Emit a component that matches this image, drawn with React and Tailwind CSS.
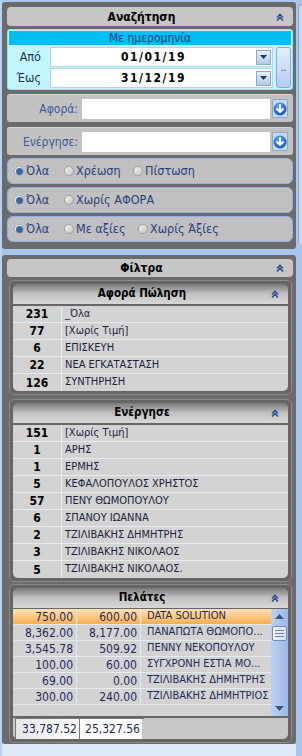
import React from "react";

const F = "font-['DejaVu_Sans_Condensed','Liberation_Sans',sans-serif]";

function Chevrons() {
  return (
    <svg width="8" height="8" viewBox="0 0 8 8">
      <path d="M1 4.5 L4 1.5 L7 4.5 M1 7.5 L4 4.5 L7 7.5" stroke="#2d4f8e" strokeWidth="1.6" fill="none" />
    </svg>
  );
}

function MainHeader({ title }) {
  return (
    <div className="h-[19px] shrink-0 rounded-[4px] bg-[#c6c6c6] flex items-center">
      <div className="flex-1 text-center text-[12px] font-bold text-black leading-none">{title}</div>
      <div className="w-[17px] flex items-center justify-start">
        <Chevrons />
      </div>
    </div>
  );
}

function SubHeader({ title }) {
  return (
    <div className="h-[20px] shrink-0 rounded-t-[5px] bg-gradient-to-b from-[#7a7a7a] via-[#c2c2c2] to-[#d8d8d8] flex items-center">
      <div className="flex-1 text-center text-[11.5px] font-bold text-black leading-none">{title}</div>
      <div className="w-[17px] flex items-center justify-start">
        <Chevrons />
      </div>
    </div>
  );
}

function DropBtn() {
  return (
    <div className="w-[15px] h-[15px] border border-[#8ea6c8] bg-gradient-to-b from-[#e6eefa] to-[#b2c8ea] flex items-center justify-center">
      <svg width="7" height="4" viewBox="0 0 7 4">
        <path d="M0 0 L7 0 L3.5 4 Z" fill="#1f3566" />
      </svg>
    </div>
  );
}

function CircleBtn() {
  return (
    <div className="w-[16px] h-[19px] border border-[#8aa6d2] bg-[#c6d8f2] rounded-[2px] flex items-center justify-center">
      <svg width="14" height="14" viewBox="0 0 14 14">
        <defs>
          <radialGradient id="cb" cx="0.4" cy="0.3" r="0.8">
            <stop offset="0" stopColor="#5da2f5" />
            <stop offset="1" stopColor="#0b4fb8" />
          </radialGradient>
        </defs>
        <circle cx="7" cy="7" r="6.5" fill="url(#cb)" />
        <path d="M7 3 V10 M4 7 L7 10 L10 7" stroke="#fff" strokeWidth="2" fill="none" strokeLinecap="round" strokeLinejoin="round" />
      </svg>
    </div>
  );
}

function Radio({ on, label, w }) {
  return (
    <div className={`flex items-center ${w}`}>
      {on ? (
        <div className="w-[10px] h-[10px] rounded-full bg-[#e8eef6] border border-[#9fb2cc] flex items-center justify-center">
          <div className="w-[7px] h-[7px] rounded-full bg-[#44649c]" />
        </div>
      ) : (
        <div className="w-[10px] h-[10px] rounded-full bg-gradient-to-br from-[#f4f4f4] to-[#c4c4c4] border border-[#a2a2a2]" />
      )}
      <span className="ml-[2px] text-[12.5px] text-[#2a3f7e] leading-none">{label}</span>
    </div>
  );
}

function RadioRow({ items }) {
  return (
    <div className="h-[26px] rounded-[6px] border border-[#8fb3e8] bg-[#c0c0c0] flex items-center pl-[6px]">
      {items.map((it, i) => (
        <Radio key={i} {...it} />
      ))}
    </div>
  );
}

function LookupRow({ label }) {
  return (
    <div className="h-[28px] rounded-[3px] bg-[#c2c2c2] border-t border-[#d6d6d6] flex items-center">
      <div className="w-[71px] text-right text-[12px] text-[#3d5a98] leading-none">{label}</div>
      <div className="ml-[4px] w-[188px] h-[20px] bg-white" />
      <div className="ml-[2px]">
        <CircleBtn />
      </div>
    </div>
  );
}

const afora = [
  ["231", "_Όλα"],
  ["77", "[Χωρίς Τιμή]"],
  ["6", "ΕΠΙΣΚΕΥΗ"],
  ["22", "ΝΕΑ ΕΓΚΑΤΑΣΤΑΣΗ"],
  ["126", "ΣΥΝΤΗΡΗΣΗ"],
];

const energise = [
  ["151", "[Χωρίς Τιμή]"],
  ["1", "ΑΡΗΣ"],
  ["1", "ΕΡΜΗΣ"],
  ["5", "ΚΕΦΑΛΟΠΟΥΛΟΣ ΧΡΗΣΤΟΣ"],
  ["57", "ΠΕΝΥ ΘΩΜΟΠΟΥΛΟΥ"],
  ["6", "ΣΠΑΝΟΥ ΙΩΑΝΝΑ"],
  ["2", "ΤΖΙΛΙΒΑΚΗΣ ΔΗΜΗΤΡΗΣ"],
  ["3", "ΤΖΙΛΙΒΑΚΗΣ ΝΙΚΟΛΑΟΣ"],
  ["5", "ΤΖΙΛΙΒΑΚΗΣ ΝΙΚΟΛΑΟΣ."],
];

const pelates = [
  ["750.00", "600.00", "DATA SOLUTION"],
  ["8,362.00", "8,177.00", "ΠΑΝΑΠΩΤΑ ΘΩΜΟΠΟ..."],
  ["3,545.78", "509.92", "ΠΕΝΝΥ ΝΕΚΟΠΟΥΛΟΥ"],
  ["100.00", "60.00", "ΣΥΓΧΡΟΝΗ ΕΣΤΙΑ ΜΟ..."],
  ["69.00", "0.00", "ΤΖΙΛΙΒΑΚΗΣ ΔΗΜΗΤΡΗΣ"],
  ["300.00", "240.00", "ΤΖΙΛΙΒΑΚΗΣ ΔΗΜΗΤΡΙΟΣ"],
];

function CountList({ rows }) {
  return (
    <div className="mt-[2px] bg-[#d3d3d3] rounded-b-[5px] overflow-hidden">
      {rows.map(([n, t], i) => (
        <div key={i} className="h-[17px] flex items-center border-b border-[#e6ecf3] last:border-b-0">
          <div className="w-[49px] h-full flex items-center justify-center border-r border-[#e6ecf3] text-[12px] font-bold text-black">
            {n}
          </div>
          <div className="pl-[3px] text-[11px] text-[#1b1f3a] whitespace-nowrap">{t}</div>
        </div>
      ))}
    </div>
  );
}

function SubPanel({ children }) {
  return (
    <div className="ml-[2px] mr-[1px] rounded-[5px] border border-[#8a8a8a] bg-[#666666] p-[3px] flex flex-col">
      {children}
    </div>
  );
}

export default function App() {
  return (
    <div className={`w-[302px] h-[756px] bg-[#a9c6ef] flex overflow-hidden ${F}`}>
      <div className="w-[2px] shrink-0 bg-[#b9d1f2]" />
      <div className="w-[294px] shrink-0 flex flex-col">
        {/* Search panel */}
        <div className="mt-[2px] h-[247px] bg-[#6b6b6b] rounded-[3px] pl-[5px] pr-[3px] pt-[5px] flex flex-col">
          <MainHeader title="Αναζήτηση" />
          <div className="mt-[3px] h-[61px] rounded-[3px] border border-[#7fe9ff] bg-[#c2f6ff] p-[1px] flex flex-col">
            <div className="h-[14px] bg-[#00bff3] text-center text-[12px] leading-[14px] text-[#1d3a86]">
              Με ημερομηνία
            </div>
            <div className="mt-[2px] flex">
              <div className="flex flex-col w-[264px]">
                {[
                  ["Από", "01/01/19", "h-[20px]"],
                  ["Έως", "31/12/19", "h-[20px] mt-[1px]"],
                ].map(([l, d, h]) => (
                  <div key={l} className={`flex items-center ${h}`}>
                    <div className="w-[41px] pr-[9px] text-right text-[12.5px] text-[#1d2e5c]">{l}</div>
                    <div className="w-[223px] h-full bg-white border border-[#b4d4e4] flex items-center pr-[1px]">
                      <div className="flex-1 text-center text-[12px] font-bold tracking-[1.5px] text-black">{d}</div>
                      <DropBtn />
                    </div>
                  </div>
                ))}
              </div>
              <div className="ml-[3px] w-[15px] h-[41px] rounded-[3px] border border-[#8aa8d8] bg-gradient-to-b from-[#e4eefb] to-[#b6cdef] flex items-center justify-center text-[10px] text-[#2a4a8a]">
                ..
              </div>
            </div>
          </div>
          <div className="mt-[4px]">
            <LookupRow label="Αφορά:" />
          </div>
          <div className="mt-[5px]">
            <LookupRow label="Ενέργησε:" />
          </div>
          <div className="mt-[3px] flex flex-col gap-[3px]">
            <RadioRow
              items={[
                { on: true, label: "Όλα", w: "w-[50px]" },
                { on: false, label: "Χρέωση", w: "w-[69px]" },
                { on: false, label: "Πίστωση", w: "" },
              ]}
            />
            <RadioRow
              items={[
                { on: true, label: "Όλα", w: "w-[50px]" },
                { on: false, label: "Χωρίς ΑΦΟΡΑ", w: "" },
              ]}
            />
            <RadioRow
              items={[
                { on: true, label: "Όλα", w: "w-[50px]" },
                { on: false, label: "Με αξίες", w: "w-[74px]" },
                { on: false, label: "Χωρίς Άξίες", w: "" },
              ]}
            />
          </div>
        </div>

        {/* Filters panel */}
        <div className="mt-[6px] h-[489px] bg-[#6b6b6b] rounded-[3px] pl-[5px] pr-[3px] pt-[4px] flex flex-col">
          <div className="h-[18px] shrink-0 rounded-[4px] bg-[#c6c6c6] flex items-center">
            <div className="flex-1 text-center text-[12px] font-bold text-black leading-none">Φίλτρα</div>
            <div className="w-[17px] flex items-center">
              <Chevrons />
            </div>
          </div>

          <div className="mt-[3px]">
            <SubPanel>
              <SubHeader title="Αφορά Πώληση" />
              <CountList rows={afora} />
            </SubPanel>
          </div>

          <div className="mt-[4px]">
            <SubPanel>
              <SubHeader title="Ενέργησε" />
              <CountList rows={energise} />
            </SubPanel>
          </div>

          <div className="mt-[2px]">
            <SubPanel>
              <SubHeader title="Πελάτες" />
              <div className="mt-[1px] h-[107px] flex bg-[#d3d3d3] overflow-hidden">
                <div className="flex-1 flex flex-col">
                  {pelates.map(([a, b, n], i) => (
                    <div
                      key={i}
                      className={`h-[16px] shrink-0 flex items-center border-b border-[#e4eaf2] text-[12px] text-[#1d2a55] whitespace-nowrap ${
                        i === 0 ? "bg-gradient-to-b from-[#ffe2b4] to-[#f7ae4c]" : ""
                      }`}
                    >
                      <div className="w-[64px] h-full pr-[3px] flex items-center justify-end border-r border-[#e4eaf2]">{a}</div>
                      <div className="w-[64px] h-full pr-[3px] flex items-center justify-end border-r border-[#e4eaf2]">{b}</div>
                      <div className="pl-[6px] text-[11px] overflow-hidden">{n}</div>
                    </div>
                  ))}
                </div>
                <div className="w-[17px] shrink-0 bg-gradient-to-r from-[#bcd2f0] to-[#9cb9e4] flex flex-col items-center pt-[5px]">
                  <svg width="9" height="5" viewBox="0 0 9 5">
                    <path d="M0 5 L4.5 0 L9 5 Z" fill="#3b5584" />
                  </svg>
                  <div className="mt-[7px] w-[15px] h-[15px] rounded-[2px] border border-[#6f8cbc] bg-gradient-to-r from-[#f2f6fc] to-[#d6e2f4] flex flex-col items-center justify-center gap-[2px]">
                    <div className="w-[9px] h-[1px] bg-[#6f82a8]" />
                    <div className="w-[9px] h-[1px] bg-[#6f82a8]" />
                    <div className="w-[9px] h-[1px] bg-[#6f82a8]" />
                  </div>
                  <div className="flex-1" />
                  <svg width="9" height="5" viewBox="0 0 9 5" className="mb-[5px]">
                    <path d="M0 0 L9 0 L4.5 5 Z" fill="#3b5584" />
                  </svg>
                </div>
              </div>
              <div className="mt-[2px] h-[21px] bg-[#c8c8c8] rounded-b-[5px] flex items-stretch pl-[2px]">
                <div className="w-[64px] border-t border-l border-[#7a7a7a] bg-gradient-to-r from-[#e6e6e6] to-white flex items-center justify-end pr-[2px] text-[12px] text-[#1d2a55]">
                  33,787.52
                </div>
                <div className="w-[63px] border-t border-l border-[#7a7a7a] bg-white flex items-center justify-end pr-[2px] text-[12px] text-[#1d2a55]">
                  25,327.56
                </div>
                <div className="w-[2px] border-t border-[#7a7a7a]" />
              </div>
            </SubPanel>
          </div>
        </div>
        <div className="flex-1 bg-[#dfeaf9]" />
      </div>
      <div className="w-[6px] shrink-0 flex flex-col">
        <div className="ml-[2px] mt-[4px] h-[240px] rounded-tl-[3px] border-l border-t border-[#8ea9d0] bg-[#c4d8f3]" />
      </div>
    </div>
  );
}
